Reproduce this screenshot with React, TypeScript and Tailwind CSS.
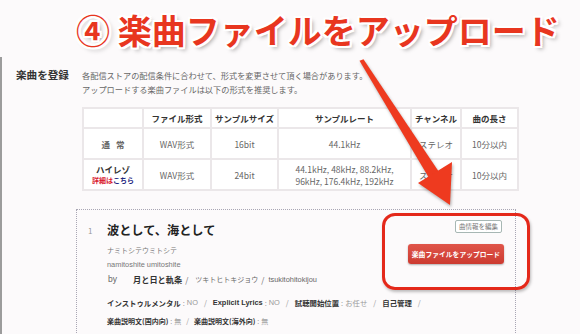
import React from "react";

export default function App() {
  const th = "border-[2px] border-[#ebe7e9] bg-white font-bold text-[#333] text-[8.5px] h-[20px] p-0 text-center align-middle";
  const td = "border-[2px] border-[#ebe7e9] bg-white text-[#666] text-[8.5px] p-0 text-center align-middle leading-[12px]";
  return (
    <div className="relative w-[580px] h-[334px] overflow-hidden bg-[#fcfafb] font-['Noto_Sans_CJK_JP','Noto_Sans',sans-serif]">
      {/* Title */}
      <div className="h-[57px] flex items-center pl-[76px] pt-[2px]">
        <div className="text-[34px] leading-none font-bold text-[#e8361f] tracking-[0px] [text-shadow:2px_0_0_#fff,-2px_0_0_#fff,0_2px_0_#fff,0_-2px_0_#fff,2px_2px_0_#fff,-2px_-2px_0_#fff,2px_-2px_0_#fff,-2px_2px_0_#fff,3px_3px_4px_rgba(0,0,0,0.35)]">
          ④ 楽曲ファイルをアップロード
        </div>
      </div>

      {/* Main */}
      <div className="h-[277px] border-l-[2px] border-[#9c9c9c] flex">
        <div className="w-[80px] shrink-0 pl-[14px] pt-[11px]">
          <div className="text-[10.6px] font-bold text-[#333] leading-[14px]">楽曲を登録</div>
        </div>
        <div className="flex-1 pt-[11px]">
          <div className="text-[8.2px] text-[#666] leading-[14px]">
            <div>各配信ストアの配信条件に合わせて、形式を変更させて頂く場合があります。</div>
            <div>アップロードする楽曲ファイルは以下の形式を推奨します。</div>
          </div>

          <table className="mt-[11px] border-collapse border-[2px] border-[#ebe7e9] w-[435px] table-fixed">
            <colgroup>
              <col className="w-[60px]" />
              <col className="w-[68px]" />
              <col className="w-[67px]" />
              <col className="w-[133px]" />
              <col className="w-[50px]" />
              <col className="w-[57px]" />
            </colgroup>
            <thead>
              <tr>
                <th className={th}></th>
                <th className={th}>ファイル形式</th>
                <th className={th}>サンプルサイズ</th>
                <th className={th}>サンプルレート</th>
                <th className={th}>チャンネル</th>
                <th className={th}>曲の長さ</th>
              </tr>
            </thead>
            <tbody>
              <tr className="h-[31px]">
                <td className={td + " font-bold text-[#333] tracking-[6px] pl-[6px]"}>通常</td>
                <td className={td}>WAV形式</td>
                <td className={td}>16bit</td>
                <td className={td}>44.1kHz</td>
                <td className={td}>ステレオ</td>
                <td className={td}>10分以内</td>
              </tr>
              <tr className="h-[31px]">
                <td className={td}>
                  <div className="font-bold text-[#333] text-[8.5px] leading-[11px]">ハイレゾ</div>
                  <div className="font-bold text-[7px] leading-[10px]">
                    <span className="text-[#d8192f]">詳細は</span>
                    <span className="text-[#1a237e]">こちら</span>
                  </div>
                </td>
                <td className={td}>WAV形式</td>
                <td className={td}>24bit</td>
                <td className={td}>
                  <div>44.1kHz, 48kHz, 88.2kHz,</div>
                  <div>96kHz, 176.4kHz, 192kHz</div>
                </td>
                <td className={td}>ステレオ</td>
                <td className={td}>10分以内</td>
              </tr>
            </tbody>
          </table>

          {/* Song box */}
          <div className="mt-[18px] -ml-[6px] w-[440px] h-[140px] border-t border-l border-r border-dotted border-[#a9a6b4] flex">
            <div className="w-[30px] shrink-0 pl-[11px] pt-[13px] text-[8px] text-[#999] leading-[16px]">1</div>
            <div className="flex-1 min-w-0 pt-[11px] whitespace-nowrap">
              <div className="text-[12.2px] font-bold text-[#222] leading-[18px]">波として、海として</div>
              <div className="mt-[5px] text-[7px] text-[#777] leading-[12px]">ナミトシテウミトシテ</div>
              <div className="mt-[3px] text-[7.4px] text-[#777] leading-[12px] font-['Liberation_Sans','Noto_Sans_CJK_JP',sans-serif]">namitoshite umitoshite</div>
              <div className="mt-[2px] flex items-center leading-[13px] text-[#666]">
                <span className="text-[8.5px] w-[26px] pl-[1px] font-['Liberation_Sans',sans-serif]">by</span>
                <span className="text-[8.2px] font-bold text-[#333]">月と日と軌条</span>
                <span className="text-[8px] mx-[3px]">/</span>
                <span className="text-[7px] ml-[4px]">ツキトヒトキジョウ</span>
                <span className="text-[8px] mx-[3px]">/</span>
                <span className="text-[7.4px] ml-[1px] font-['Liberation_Sans',sans-serif]">tsukitohitokijou</span>
              </div>
              <div className="mt-[11px] flex items-center text-[7.4px] leading-[12px] text-[#999]">
                <span className="font-bold text-[#333]">インストゥルメンタル</span>
                <span className="mx-[2px]">:</span>
                <span className="font-['Liberation_Sans',sans-serif]">NO</span>
                <span className="mx-[6px]">/</span>
                <span className="font-bold text-[#333] font-['Liberation_Sans',sans-serif]">Explicit Lyrics</span>
                <span className="mx-[2px]">:</span>
                <span className="font-['Liberation_Sans',sans-serif]">NO</span>
                <span className="mx-[6px]">/</span>
                <span className="font-bold text-[#333]">試聴開始位置</span>
                <span className="mx-[2px]">:</span>
                <span>お任せ</span>
                <span className="mx-[6px]">/</span>
                <span className="font-bold text-[#333]">自己管理</span>
                <span className="mx-[6px]">/</span>
              </div>
              <div className="mt-[6px] flex items-center text-[7px] leading-[12px] text-[#999]">
                <span className="font-bold text-[#333]">楽曲説明文(国内向)</span>
                <span className="mx-[2px]">:</span>
                <span>無</span>
                <span className="mx-[5px]">/</span>
                <span className="font-bold text-[#333]">楽曲説明文(海外向)</span>
                <span className="mx-[2px]">:</span>
                <span>無</span>
              </div>
            </div>
            <div className="w-[110px] shrink-0 flex flex-col items-end pt-[10px] pr-[13px]">
              <div className="h-[13px] w-[47px] border border-[#a7b7b4] rounded-[2px] bg-white flex items-center justify-center text-[6.5px] text-[#777] leading-none">曲情報を編集</div>
              <div className="mt-[11px] -mr-[2px] h-[20px] w-[96px] rounded-[3px] bg-gradient-to-b from-[#e0554a] to-[#cc3a30] shadow-[0_1px_2px_rgba(0,0,0,0.3)] flex items-center justify-center text-[6.8px] font-bold text-white leading-none">楽曲ファイルをアップロード</div>
            </div>
          </div>
        </div>
      </div>

      {/* Red highlight annotation */}
      <div className="absolute left-[382px] top-[213px] w-[148px] h-[77px] border-[3.5px] border-[#e4281a] rounded-[13px] shadow-[1px_2px_3px_rgba(0,0,0,0.25)] pointer-events-none" />

      {/* Arrow annotation */}
      <svg className="absolute left-0 top-0 pointer-events-none [filter:drop-shadow(1px_2px_1.5px_rgba(0,0,0,0.3))]" width="580" height="334" viewBox="0 0 580 334">
        <polygon points="359.5,60.8 363.5,59.2 439,172 429,178" fill="#ee3a1f" />
        <polygon points="418,183 452,162 450,205" fill="#ee3a1f" />
      </svg>
    </div>
  );
}
